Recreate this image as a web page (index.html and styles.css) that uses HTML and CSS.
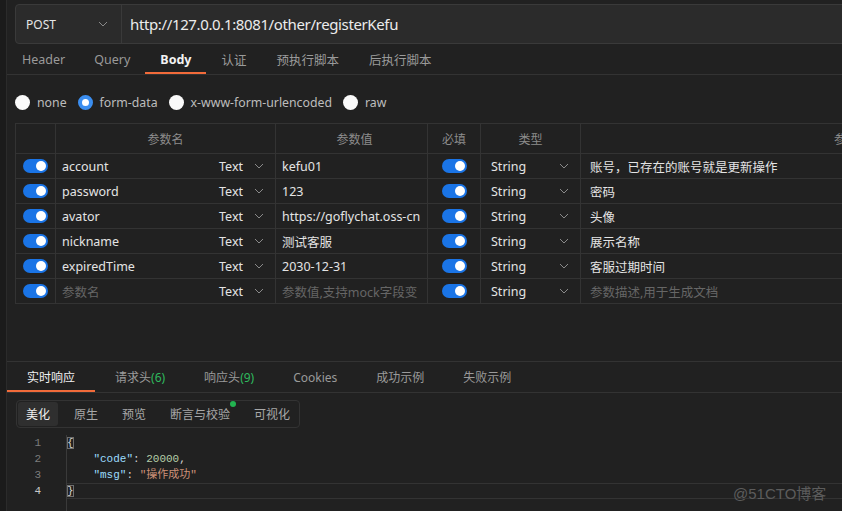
FILE: index.html
```html
<!DOCTYPE html>
<html lang="zh-CN">
<head>
<meta charset="utf-8">
<title>registerKefu</title>
<link rel="stylesheet" href="styles.css">
</head>
<body>
<div class="app">
  <div class="rail"></div>
  <div class="main">
    <div class="request">
      <div class="urlbar">
        <div class="method">
          <span>POST</span>
          <svg class="chev" width="10" height="6" viewBox="0 0 10 6"><polyline points="1,1 5,5 9,1" fill="none" stroke="#8a8a8a" stroke-width="1"/></svg>
        </div>
        <div class="url">http://127.0.0.1:8081/other/registerKefu</div>
      </div>
      <div class="tabs">
        <div class="tab">Header</div>
        <div class="tab">Query</div>
        <div class="tab active">Body</div>
        <div class="tab">认证</div>
        <div class="tab">预执行脚本</div>
        <div class="tab">后执行脚本</div>
      </div>
      <div class="radios">
        <label class="radio"><span class="dot"></span>none</label>
        <label class="radio on"><span class="dot"></span>form-data</label>
        <label class="radio"><span class="dot"></span>x-www-form-urlencoded</label>
        <label class="radio"><span class="dot"></span>raw</label>
      </div>
      <div class="table">
        <div class="row head">
          <div class="c c0"></div>
          <div class="c c1">参数名</div>
          <div class="c c2">参数值</div>
          <div class="c c3">必填</div>
          <div class="c c4">类型</div>
          <div class="c c5">参</div>
        </div>
        <div class="row">
          <div class="c c0"><span class="sw"></span></div>
          <div class="c c1"><span class="nm">account</span><span class="sel">Text<svg class="chev" width="10" height="6" viewBox="0 0 10 6"><polyline points="1,1 5,5 9,1" fill="none" stroke="#8a8a8a" stroke-width="1"/></svg></span></div>
          <div class="c c2">kefu01</div>
          <div class="c c3"><span class="sw"></span></div>
          <div class="c c4"><span class="nm">String</span><svg class="chev" width="10" height="6" viewBox="0 0 10 6"><polyline points="1,1 5,5 9,1" fill="none" stroke="#8a8a8a" stroke-width="1"/></svg></div>
          <div class="c c5">账号，已存在的账号就是更新操作</div>
        </div>
        <div class="row">
          <div class="c c0"><span class="sw"></span></div>
          <div class="c c1"><span class="nm">password</span><span class="sel">Text<svg class="chev" width="10" height="6" viewBox="0 0 10 6"><polyline points="1,1 5,5 9,1" fill="none" stroke="#8a8a8a" stroke-width="1"/></svg></span></div>
          <div class="c c2">123</div>
          <div class="c c3"><span class="sw"></span></div>
          <div class="c c4"><span class="nm">String</span><svg class="chev" width="10" height="6" viewBox="0 0 10 6"><polyline points="1,1 5,5 9,1" fill="none" stroke="#8a8a8a" stroke-width="1"/></svg></div>
          <div class="c c5">密码</div>
        </div>
        <div class="row">
          <div class="c c0"><span class="sw"></span></div>
          <div class="c c1"><span class="nm">avator</span><span class="sel">Text<svg class="chev" width="10" height="6" viewBox="0 0 10 6"><polyline points="1,1 5,5 9,1" fill="none" stroke="#8a8a8a" stroke-width="1"/></svg></span></div>
          <div class="c c2">https://goflychat.oss-cn</div>
          <div class="c c3"><span class="sw"></span></div>
          <div class="c c4"><span class="nm">String</span><svg class="chev" width="10" height="6" viewBox="0 0 10 6"><polyline points="1,1 5,5 9,1" fill="none" stroke="#8a8a8a" stroke-width="1"/></svg></div>
          <div class="c c5">头像</div>
        </div>
        <div class="row">
          <div class="c c0"><span class="sw"></span></div>
          <div class="c c1"><span class="nm">nickname</span><span class="sel">Text<svg class="chev" width="10" height="6" viewBox="0 0 10 6"><polyline points="1,1 5,5 9,1" fill="none" stroke="#8a8a8a" stroke-width="1"/></svg></span></div>
          <div class="c c2">测试客服</div>
          <div class="c c3"><span class="sw"></span></div>
          <div class="c c4"><span class="nm">String</span><svg class="chev" width="10" height="6" viewBox="0 0 10 6"><polyline points="1,1 5,5 9,1" fill="none" stroke="#8a8a8a" stroke-width="1"/></svg></div>
          <div class="c c5">展示名称</div>
        </div>
        <div class="row">
          <div class="c c0"><span class="sw"></span></div>
          <div class="c c1"><span class="nm">expiredTime</span><span class="sel">Text<svg class="chev" width="10" height="6" viewBox="0 0 10 6"><polyline points="1,1 5,5 9,1" fill="none" stroke="#8a8a8a" stroke-width="1"/></svg></span></div>
          <div class="c c2">2030-12-31</div>
          <div class="c c3"><span class="sw"></span></div>
          <div class="c c4"><span class="nm">String</span><svg class="chev" width="10" height="6" viewBox="0 0 10 6"><polyline points="1,1 5,5 9,1" fill="none" stroke="#8a8a8a" stroke-width="1"/></svg></div>
          <div class="c c5">客服过期时间</div>
        </div>
        <div class="row">
          <div class="c c0"><span class="sw"></span></div>
          <div class="c c1"><span class="nm ph">参数名</span><span class="sel">Text<svg class="chev" width="10" height="6" viewBox="0 0 10 6"><polyline points="1,1 5,5 9,1" fill="none" stroke="#8a8a8a" stroke-width="1"/></svg></span></div>
          <div class="c c2 ph">参数值,支持mock字段变</div>
          <div class="c c3"><span class="sw"></span></div>
          <div class="c c4"><span class="nm">String</span><svg class="chev" width="10" height="6" viewBox="0 0 10 6"><polyline points="1,1 5,5 9,1" fill="none" stroke="#8a8a8a" stroke-width="1"/></svg></div>
          <div class="c c5 ph">参数描述,用于生成文档</div>
        </div>
      </div>
    </div>
    <div class="response">
      <div class="rtabs">
        <div class="rtab active">实时响应</div>
        <div class="rtab">请求头<span class="num">(6)</span></div>
        <div class="rtab">响应头<span class="num">(9)</span></div>
        <div class="rtab">Cookies</div>
        <div class="rtab">成功示例</div>
        <div class="rtab">失败示例</div>
      </div>
      <div class="segwrap">
        <div class="seg">
          <div class="segitem active">美化</div>
          <div class="segitem">原生</div>
          <div class="segitem">预览</div>
          <div class="segitem badge">断言与校验</div>
          <div class="segitem">可视化</div>
        </div>
      </div>
      <div class="code">
        <div class="gutter">
          <div>1</div><div>2</div><div>3</div><div class="cur">4</div>
        </div>
        <div class="lines">
          <div class="ln"><span class="br">{</span></div>
          <div class="ln">    <span class="k">"code"</span>: <span class="n">20000</span>,</div>
          <div class="ln">    <span class="k">"msg"</span>: <span class="s">"操作成功"</span></div>
          <div class="ln curline"><span class="br">}</span></div>
        </div>
      </div>
    </div>
  </div>
</div>
<div class="watermark">@51CTO博客</div>
</body>
</html>
```
FILE: styles.css
```css
* { box-sizing: border-box; }
html, body {
  margin: 0;
  height: 511px;
  overflow: hidden;
  background: #212121;
  font-family: "Noto Sans", "Noto Sans CJK SC", sans-serif;
  color: #d8d8d8;
  font-size: 12px;
}
.app { display: flex; height: 511px; }
.rail {
  width: 7px;
  flex: none;
  background: #1b1b1b;
  border-right: 1px solid #2b2b2b;
}
.main { flex: 1; min-width: 0; display: flex; flex-direction: column; overflow: hidden; }
.request { height: 361px; padding-top: 4px; }
.urlbar {
  margin-left: 8px;
  width: calc(100% + 20px);
  height: 40px;
  display: flex;
  align-items: center;
  background: #2b2b2b;
  border: 1px solid #3a3a3a;
  border-radius: 4px;
}
.method {
  width: 106px;
  height: 100%;
  display: flex;
  align-items: center;
  justify-content: space-between;
  padding: 0 13px 0 10px;
  border-right: 1px solid #3a3a3a;
  font-size: 12px;
  color: #e6e6e6;
}
.url { padding-left: 8px; font-size: 15px; color: #ececec; letter-spacing: -0.37px; }
.tabs {
  display: flex;
  height: 31px;
  border-bottom: 1px solid #333;
}
.tab {
  padding: 0 15px;
  display: flex;
  align-items: center;
  color: #9a9a9a;
  font-size: 12.5px;
}
.tab:first-child { padding-right: 14px; }
.tab.active { color: #f2f2f2; font-weight: 700; border-bottom: 2px solid #f26b3a; padding-top: 2px; }
.radios {
  display: flex;
  align-items: center;
  height: 25px;
  margin-top: 15px;
  padding-left: 8px;
  gap: 11px;
}
.radio { display: flex; align-items: center; color: #bdbdbd; font-size: 12.3px; }
.radio .dot {
  width: 15px; height: 15px; border-radius: 50%;
  background: #fafafa;
  margin-right: 7px;
  flex: none;
}
.radio.on .dot {
  background: #fff;
  border: 4.5px solid #3b8ef0;
}
.table {
  margin: 8px 0 0 8px;
  width: 900px;
  border-top: 1px solid #333;
  border-left: 1px solid #333;
}
.row { display: flex; height: 25px; border-bottom: 1px solid #333; }
.row.head { height: 30px; }
.c {
  border-right: 1px solid #333;
  display: flex;
  align-items: center;
  white-space: nowrap;
  overflow: hidden;
  color: #e4e4e4;
  font-size: 12.5px;
}
.head .c { justify-content: center; color: #8c8c8c; font-size: 12px; }
.c0 { width: 40px; justify-content: center; }
.c1 { width: 220px; padding: 0 11px 0 6px; justify-content: space-between; }
.c2 { width: 152px; padding-left: 6px; }
.c3 { width: 53px; justify-content: center; }
.c4 { width: 100px; padding: 0 11px 0 10px; justify-content: space-between; }
.c5 { flex: 1; padding-left: 9px; }
.head .c1, .head .c4 { justify-content: center; padding: 0; }
.head .c5 { justify-content: flex-start; padding-left: 253px; }
.ph { color: #666; }
.nm.ph { color: #666; }
.sel { display: flex; align-items: center; width: 45px; justify-content: space-between; color: #e4e4e4; }
.chev { flex: none; }
.sw {
  width: 25px; height: 14px; border-radius: 7px;
  background: #1a74e6;
  position: relative;
  display: inline-block;
}
.sw::after {
  content: "";
  position: absolute;
  right: 2px; top: 2px;
  width: 10px; height: 10px; border-radius: 50%;
  background: #fff;
}
.response { flex: 1; border-top: 1px solid #333; display: flex; flex-direction: column; }
.rtabs { display: flex; height: 31px; border-bottom: 1px solid #333; }
.rtab {
  padding: 0 19px 0 20px;
  display: flex; align-items: center;
  color: #9a9a9a; font-size: 12px;
  white-space: nowrap;
}
.rtab.active { color: #f0f0f0; border-bottom: 2px solid #f26b3a; padding-top: 2px; padding-right: 20px; }
.num { color: #2fb95e; }
.segwrap { display: flex; padding: 7px 0 0 9px; }
.seg {
  height: 28px;
  display: flex;
  align-items: center;
  gap: 8px;
  padding: 0 1px;
  border: 1px solid #333;
  border-radius: 4px;
}
.segitem {
  flex: none;
  height: 24px;
  padding: 0 8px;
  display: flex; align-items: center;
  color: #a8a8a8; font-size: 12px;
  border-radius: 3px;
  white-space: nowrap;
  position: relative;
}
.segitem.active { background: #2f2f2f; color: #f0f0f0; }
.segitem.badge::after {
  content: "";
  position: absolute;
  right: 2px; top: -1px;
  width: 6px; height: 6px; border-radius: 50%;
  background: #22b350;
}
.code {
  margin-top: 7px;
  flex: 1;
  display: flex;
  font-family: "Liberation Mono", "Noto Sans CJK SC", monospace;
  font-size: 11px;
}
.gutter { width: 59px; padding-right: 25px; text-align: right; color: #7d7d7d; }
.gutter div { height: 16px; line-height: 16px; }
.gutter .cur { color: #c8c8c8; }
.lines { flex: 1; border-left: 1px solid #3a3a3a; }
.ln { height: 16px; line-height: 16px; white-space: pre; color: #d4d4d4; }
.curline { border-top: 1px solid #333; border-bottom: 1px solid #333; height: 16px; line-height: 14px; }
.br { outline: 1px solid #6f6f6f; outline-offset: -1px; color: #d4d4d4; }
.k { color: #9cdcfe; }
.n { color: #b5cea8; }
.s { color: #ce9178; }
.watermark {
  position: absolute;
  left: 733px; top: 482px;
  font-family: "Liberation Sans", "Noto Sans CJK SC", sans-serif;
  font-size: 15px;
  color: #5c5c5c;
}
```
